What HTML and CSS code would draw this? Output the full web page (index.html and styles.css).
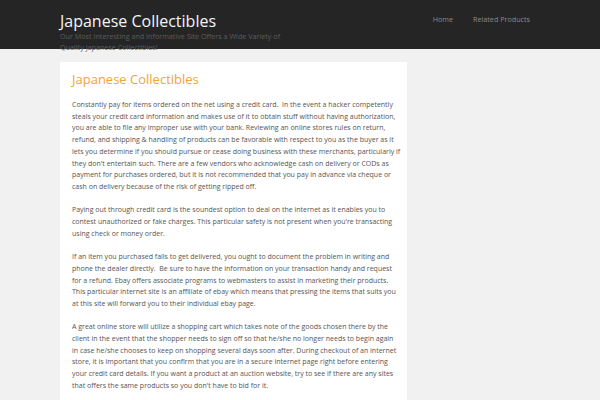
FILE: index.html
```html
<!DOCTYPE html>
<html>
<head>
<meta charset="utf-8">
<link rel="stylesheet" href="styles.css">
</head>
<body>
<header class="site-header">
  <div class="wrap header-inner">
    <div class="branding">
      <div class="site-title">Japanese Collectibles</div>
      <div class="site-desc">Our Most Interesting and Informative Site Offers a Wide Variety of Quality Japanese Collectibles!</div>
    </div>
    <nav class="nav">
      <a class="nav-link">Home</a>
      <a class="nav-link">Related Products</a>
    </nav>
  </div>
</header>
<div class="wrap content">
  <main class="card">
    <h1 class="entry-title">Japanese Collectibles</h1>
    <p>Constantly pay for items ordered on the net using a credit card.&nbsp; In the event a hacker competently<br>steals your credit card information and makes use of it to obtain stuff without having authorization,<br>you are able to file any improper use with your bank. Reviewing an online stores rules on return,<br>refund, and shipping &amp; handling of products can be favorable with respect to you as the buyer as it<br>lets you determine if you should pursue or cease doing business with these merchants, particularly if<br>they don't entertain such. There are a few vendors who acknowledge cash on delivery or CODs as<br>payment for purchases ordered, but it is not recommended that you pay in advance via cheque or<br>cash on delivery because of the risk of getting ripped off.</p>
    <p>Paying out through credit card is the soundest option to deal on the internet as it enables you to<br>contest unauthorized or fake charges. This particular safety is not present when you're transacting<br>using check or money order.</p>
    <p>If an item you purchased fails to get delivered, you ought to document the problem in writing and<br>phone the dealer directly.&nbsp; Be sure to have the information on your transaction handy and request<br>for a refund. Ebay offers associate programs to webmasters to assist in marketing their products.<br>This particular internet site is an affiliate of ebay which means that pressing the items that suits you<br>at this site will forward you to their individual ebay page.</p>
    <p>A great online store will utilize a shopping cart which takes note of the goods chosen there by the<br>client in the event that the shopper needs to sign off so that he/she no longer needs to begin again<br>in case he/she chooses to keep on shopping several days soon after. During checkout of an internet<br>store, it is important that you confirm that you are in a secure internet page right before entering<br>your credit card details. If you want a product at an auction website, try to see if there are any sites<br>that offers the same products so you don't have to bid for it.</p>
  </main>
</div>
</body>
</html>
```
FILE: styles.css
```css
html, body {
  margin: 0;
  padding: 0;
}
body {
  background: #f1f1f1;
  font-family: "Open Sans", "DejaVu Sans", sans-serif;
  color: #555;
  overflow: hidden;
}
.wrap {
  width: 480px;
  margin: 0 0 0 60px;
}
.site-header {
  background: #252525;
  height: 49px;
}
.header-inner {
  display: flex;
  justify-content: space-between;
  align-items: flex-start;
}
.branding {
  width: 232px;
  padding-top: 11px;
}
.site-title {
  color: #f4f4f4;
  font-size: 16px;
  line-height: 20px;
  font-weight: 400;
  white-space: nowrap;
}
.site-desc {
  color: #5c5c5c;
  font-size: 7.2px;
  line-height: 10.5px;
  margin-top: 0;
}
.nav {
  display: flex;
  gap: 20px;
  padding-top: 13px;
  padding-right: 10px;
}
.nav-link {
  color: #8a8a8a;
  font-size: 7.2px;
  line-height: 12px;
  font-weight: 400;
}
.content {
  padding-top: 13px;
}
.card {
  display: block;
  width: 323px;
  background: #fff;
  padding: 9px 12px 20px;
}
.entry-title {
  margin: 0 0 12px;
  color: #efa633;
  font-size: 13px;
  line-height: 16px;
  font-weight: 400;
}
.card p {
  margin: 0 0 11.7px;
  font-size: 7px;
  line-height: 11.7px;
  color: #555;
  white-space: nowrap;
}
```
